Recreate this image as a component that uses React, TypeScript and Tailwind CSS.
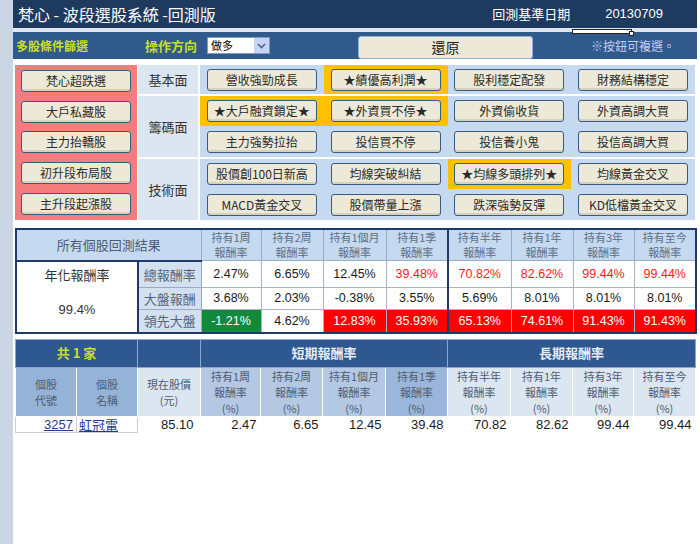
import React from 'react'

const CJK = "font-['Noto_Sans_CJK_TC','Noto_Sans',sans-serif]"
const NUM = "font-['Liberation_Sans','Noto_Sans_CJK_TC',sans-serif]"

type Cell = { label: string; hot?: boolean }

const groups: { name: string; rows: Cell[][]; heights: string[] }[] = [
    {
        name: '基本面',
        heights: ['h-[29px]'],
        rows: [
            [
                { label: '營收強勁成長' },
                { label: '★績優高利潤★', hot: true },
                { label: '股利穩定配發' },
                { label: '財務結構穩定' },
            ],
        ],
    },
    {
        name: '籌碼面',
        heights: ['h-[30px]', 'h-[31px]'],
        rows: [
            [
                { label: '★大戶融資鎖定★', hot: true },
                { label: '★外資買不停★', hot: true },
                { label: '外資偷收貨' },
                { label: '外資高調大買' },
            ],
            [
                { label: '主力強勢拉抬' },
                { label: '投信買不停' },
                { label: '投信養小鬼' },
                { label: '投信高調大買' },
            ],
        ],
    },
    {
        name: '技術面',
        heights: ['h-[30px]', 'h-[31px]'],
        rows: [
            [
                { label: '股價創100日新高' },
                { label: '均線突破糾結' },
                { label: '★均線多頭排列★', hot: true },
                { label: '均線黃金交叉' },
            ],
            [
                { label: 'MACD黃金交叉' },
                { label: '股價帶量上漲' },
                { label: '跌深強勢反彈' },
                { label: 'KD低檔黃金交叉' },
            ],
        ],
    },
]

const picks = ['梵心超跌選', '大戶私藏股', '主力抬轎股', '初升段布局股', '主升段起漲股']

const periods = ['持有1周', '持有2周', '持有1個月', '持有1季', '持有半年', '持有1年', '持有3年', '持有至今']
const colWidths = [60, 62, 63, 62, 63, 62, 61, 62]

// kind: n = normal, r = red text, g = green fill, R = red fill
const resultRows: { label: string; values: [string, string][]; h: string }[] = [
    {
        label: '總報酬率',
        h: 'h-[26px]',
        values: [
            ['2.47%', 'n'], ['6.65%', 'n'], ['12.45%', 'n'], ['39.48%', 'r'],
            ['70.82%', 'r'], ['82.62%', 'r'], ['99.44%', 'r'], ['99.44%', 'r'],
        ],
    },
    {
        label: '大盤報酬',
        h: 'h-[22px]',
        values: [
            ['3.68%', 'n'], ['2.03%', 'n'], ['-0.38%', 'n'], ['3.55%', 'n'],
            ['5.69%', 'n'], ['8.01%', 'n'], ['8.01%', 'n'], ['8.01%', 'n'],
        ],
    },
    {
        label: '領先大盤',
        h: 'h-[22px]',
        values: [
            ['-1.21%', 'g'], ['4.62%', 'n'], ['12.83%', 'R'], ['35.93%', 'R'],
            ['65.13%', 'R'], ['74.61%', 'R'], ['91.43%', 'R'], ['91.43%', 'R'],
        ],
    },
]

const stock = { code: '3257', name: '虹冠電', price: '85.10', values: ['2.47', '6.65', '12.45', '39.48', '70.82', '82.62', '99.44', '99.44'] }

const Btn: React.FC<{ label: string }> = ({ label }) => (
    <div className="w-[110px] h-[22px] flex items-center justify-center rounded-[3px] border border-[#3a5a80] bg-[#ece9d8] text-[12px] text-[#2a2a2a] shadow-[inset_0_-2px_0_#d8d2bc] whitespace-nowrap">
        {label}
    </div>
)

const valueClass = (kind: string) => {
    if (kind === 'r') return 'bg-white text-[#f01c1c]'
    if (kind === 'g') return 'bg-[#128a3e] text-white'
    if (kind === 'R') return 'bg-[#ff0000] text-white'
    return 'bg-white text-[#1a1a1a]'
}

const shortHead = ['bg-[#b4c8e3]', 'bg-[#b4c8e3]', 'bg-[#b4c8e3]', 'bg-[#9ab6da]', 'bg-[#dce6f1]', 'bg-[#dce6f1]', 'bg-[#dce6f1]', 'bg-[#dce6f1]']

export default function App() {
    return (
        <div className={`flex w-[700px] h-[544px] bg-white ${CJK}`}>
            {/* left grey frame */}
            <div className="w-[13px] h-full bg-[#cbd6e4]" />

            <div className="relative w-[684px] flex flex-col">
                {/* title bar */}
                <div className="h-[28px] flex items-center bg-[#1f3a5f] text-white">
                    <div className="pl-[5px] text-[16px] leading-none">梵心 - 波段選股系統 -回測版</div>
                    <div className="ml-auto flex items-center pr-[34px]">
                        <span className="text-[13px]">回測基準日期</span>
                        <span className={`ml-[35px] text-[13px] ${NUM}`}>20130709</span>
                    </div>
                </div>
                <div className="h-[4px] bg-[#dfe6ef]" />
                {/* floating selection box */}
                <div className="absolute left-[559px] top-[29px] w-[60px] h-[5px] bg-white border border-[#222]" />
                <div className="absolute left-[616px] top-[31px] w-[5px] h-[5px] bg-white border border-[#222]" />

                {/* control bar */}
                <div className="h-[27px] flex items-center bg-[#30598c]">
                    <div className="w-[132px] pl-[3px] text-[12px] font-bold text-[#c8df2a]">多股條件篩選</div>
                    <div className="w-[62px] text-[13px] font-bold text-[#c8df2a]">操作方向</div>
                    <div className="w-[63px] h-[17px] flex items-center bg-white border border-[#7f9db9]">
                        <span className="flex-1 pl-[3px] text-[11px] leading-none text-black">做多</span>
                        <span className="w-[15px] h-[15px] flex items-center justify-center bg-[#c3d4f6]">
                            <svg width="9" height="6" viewBox="0 0 9 6">
                                <path d="M1 1 L4.5 4.5 L8 1" fill="none" stroke="#4d6185" strokeWidth="1.6" />
                            </svg>
                        </span>
                    </div>
                    <div className="w-[88px]" />
                    <div className="self-end w-[175px] h-[23px] flex items-center justify-center rounded-[3px] border border-[#8fb0d8] bg-[#ece9d8] text-[14px] text-[#222]">
                        還原
                    </div>
                    <div className="ml-[58px] text-[12px] text-[#c4ccf2]">※按鈕可複選。</div>
                </div>

                {/* condition buttons */}
                <div className="mt-[6px] ml-[2px] w-[680px] flex">
                    <div className="w-[122px] h-[155px] bg-[#f47c7e] flex flex-col items-center justify-around py-[1px]">
                        {picks.map((p) => (
                            <Btn key={p} label={p} />
                        ))}
                    </div>
                    <div className="ml-[1px] flex-1 flex flex-col gap-[2px]">
                        {groups.map((g) => (
                            <div key={g.name} className="flex gap-[2px]">
                                <div className="w-[60px] bg-[#dce6f1] flex items-center justify-center text-[13px] text-[#333]">
                                    {g.name}
                                </div>
                                <div className="flex-1 flex flex-col">
                                    {g.rows.map((row, ri) => (
                                        <div key={ri} className={`grid grid-cols-4 ${g.heights[ri]}`}>
                                            {row.map((c) => (
                                                <div
                                                    key={c.label}
                                                    className={`flex items-center justify-center ${c.hot ? 'bg-[#ffc000]' : 'bg-[#c5d9f1]'}`}
                                                >
                                                    <Btn label={c.label} />
                                                </div>
                                            ))}
                                        </div>
                                    ))}
                                </div>
                            </div>
                        ))}
                    </div>
                </div>

                {/* backtest summary */}
                <table className="mt-[8px] ml-[2px] w-[680px] table-fixed border-collapse border-2 border-[#1f3a68] leading-none">
                    <colgroup>
                        <col className="w-[122px]" />
                        <col className="w-[63px]" />
                        {colWidths.map((w, i) => (
                            <col key={i} style={{ width: w }} />
                        ))}
                    </colgroup>
                    <thead>
                        <tr className="h-[31px]">
                            <th colSpan={2} className="bg-[#c5d9f1] border-b-2 border-[#1f3a68] p-0 font-normal text-[13px] text-[#4d5c70]">
                                所有個股回測結果
                            </th>
                            {periods.map((p, i) => (
                                <th
                                    key={p}
                                    className={`bg-[#c5d9f1] border border-[#9aaac0] p-0 font-normal text-[11px] leading-[15px] text-[#5f6f86] ${i === 4 ? 'border-l-2 border-l-[#1f3a68]' : ''}`}
                                >
                                    <div>{p}</div>
                                    <div>報酬率</div>
                                </th>
                            ))}
                        </tr>
                    </thead>
                    <tbody>
                        {resultRows.map((r, ri) => (
                            <tr key={r.label} className={r.h}>
                                {ri === 0 && (
                                    <td rowSpan={3} className="bg-white border-r-2 border-[#1f3a68] p-0 align-top">
                                        <div className="h-[70px] flex flex-col text-[13px] text-[#333]">
                                            <div className="h-[26px] flex items-center justify-center">年化報酬率</div>
                                            <div className={`flex-1 flex items-center justify-center text-[13px] ${NUM}`}>99.4%</div>
                                        </div>
                                    </td>
                                )}
                                <td className="bg-[#d3e0f0] border border-[#9aaac0] p-0 text-center text-[13px] text-[#55657a]">
                                    {r.label}
                                </td>
                                {r.values.map(([v, k], i) => (
                                    <td
                                        key={i}
                                        className={`border border-[#a8b4c4] p-0 text-center text-[12.5px] ${NUM} ${valueClass(k)} ${i === 4 ? 'border-l-2 border-l-[#1f3a68]' : ''}`}
                                    >
                                        {v}
                                    </td>
                                ))}
                            </tr>
                        ))}
                    </tbody>
                </table>

                {/* stock list */}
                <table className="mt-[5px] ml-[2px] w-[680px] table-fixed border-collapse">
                    <colgroup>
                        <col className="w-[61px]" />
                        <col className="w-[61px]" />
                        <col className="w-[63px]" />
                        {colWidths.map((w, i) => (
                            <col key={i} style={{ width: w }} />
                        ))}
                    </colgroup>
                    <thead>
                        <tr className="h-[28px] bg-[#2f5790]">
                            <th colSpan={2} className="border border-[#8ea8cc] text-[13px] font-bold text-[#c8df2a]">
                                共 1 家
                            </th>
                            <th className="border border-[#8ea8cc]" />
                            <th colSpan={4} className="border border-[#8ea8cc] text-[13px] font-bold text-[#e4ecf7]">
                                短期報酬率
                            </th>
                            <th colSpan={4} className="border border-[#8ea8cc] text-[13px] font-bold text-[#e4ecf7]">
                                長期報酬率
                            </th>
                        </tr>
                        <tr className="h-[48px] text-[11px] leading-[16px] font-normal text-[#4e5d72]">
                            <th className="bg-[#95b3d7] border border-white font-normal">
                                <div>個股</div>
                                <div>代號</div>
                            </th>
                            <th className="bg-[#95b3d7] border border-white font-normal">
                                <div>個股</div>
                                <div>名稱</div>
                            </th>
                            <th className="bg-[#dce6f1] border border-white font-normal">
                                <div>現在股價</div>
                                <div>(元)</div>
                            </th>
                            {periods.map((p, i) => (
                                <th key={p} className={`${shortHead[i]} border border-white font-normal`}>
                                    <div>{p}</div>
                                    <div>報酬率</div>
                                    <div>(%)</div>
                                </th>
                            ))}
                        </tr>
                    </thead>
                    <tbody>
                        <tr className={`h-[16px] text-[13px] leading-none ${NUM}`}>
                            <td className="border border-[#c8cfd8] text-right pr-[3px] text-[#1f3a93] underline">{stock.code}</td>
                            <td className={`border border-[#c8cfd8] text-left pl-[2px] text-[#1f3a93] underline ${CJK}`}>{stock.name}</td>
                            <td className="text-right pr-[7px] text-[#1a1a1a]">{stock.price}</td>
                            {stock.values.map((v, i) => (
                                <td key={i} className="text-right pr-[4px] text-[#1a1a1a]">
                                    {v}
                                </td>
                            ))}
                        </tr>
                    </tbody>
                </table>
            </div>
        </div>
    )
}
